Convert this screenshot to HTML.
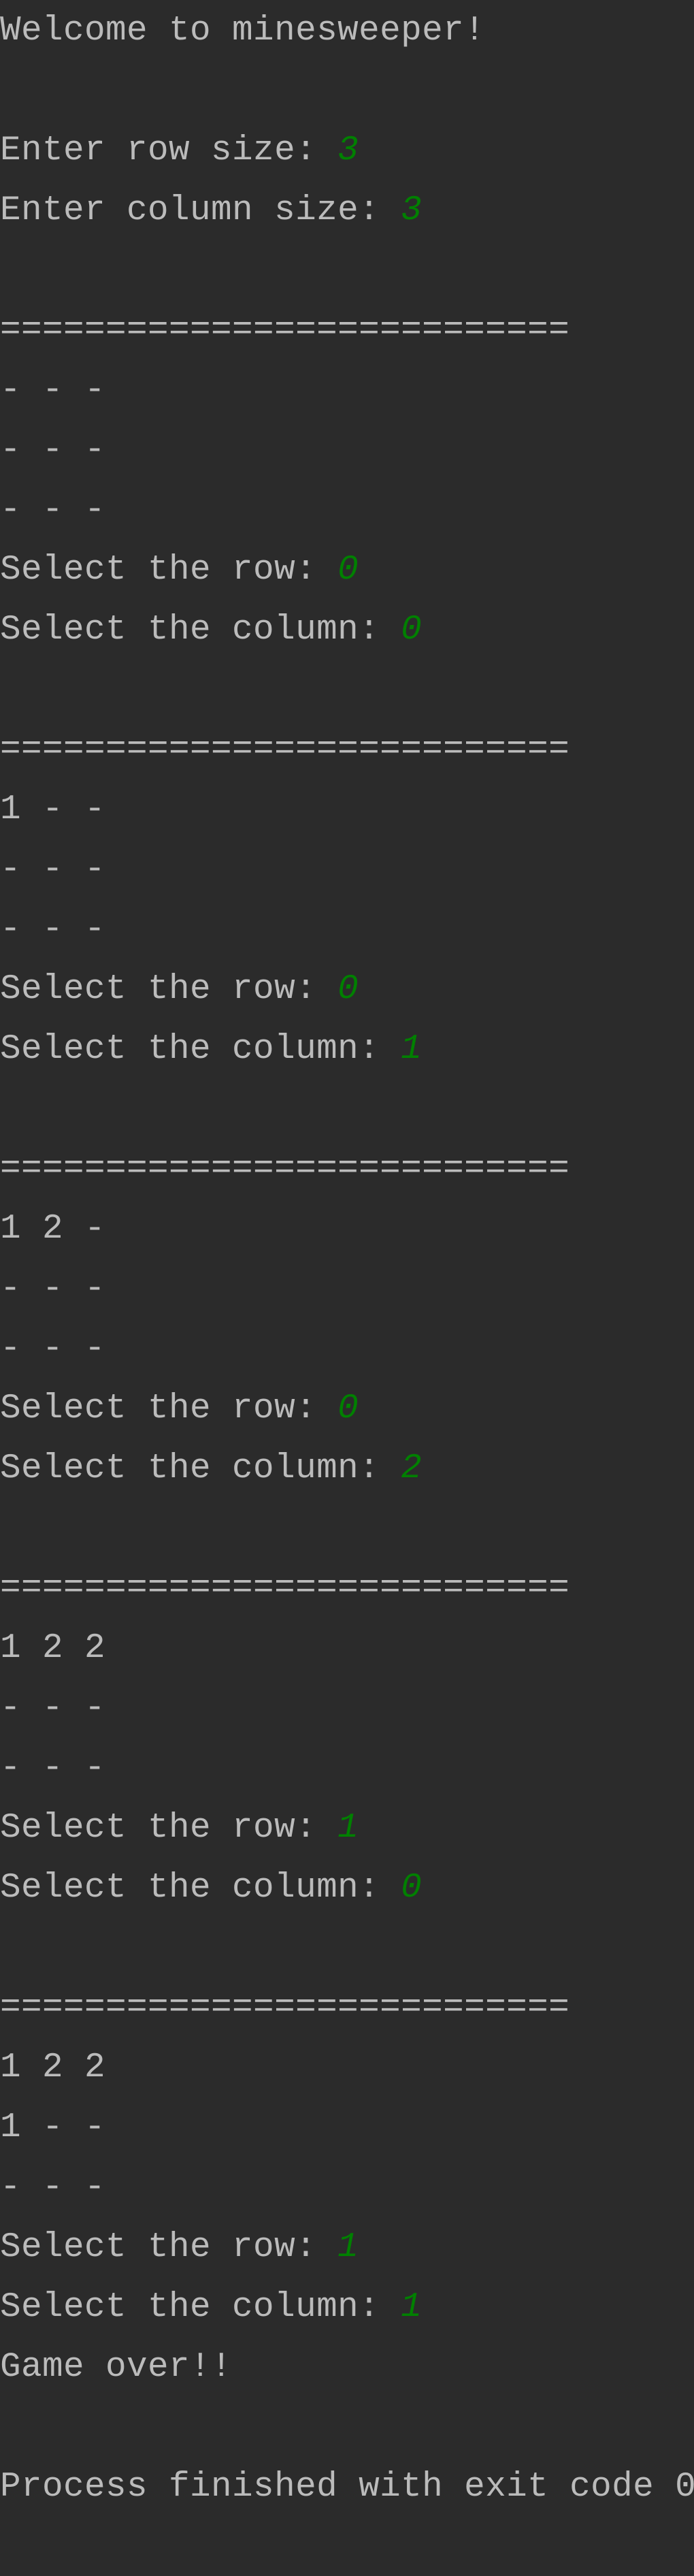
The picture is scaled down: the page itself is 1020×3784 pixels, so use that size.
<!DOCTYPE html>
<html><head><meta charset="utf-8"><style>
html,body{margin:0;padding:0;background:#2b2b2b;}
body{width:1020px;height:3784px;overflow:hidden;}
pre{margin:0;padding:2px 0 0 0;font-family:"Liberation Mono",monospace;font-size:51px;line-height:88px;letter-spacing:0.4px;color:#bbbbbb;white-space:pre;}
i{color:#008000;font-style:italic;}
</style></head><body><pre>Welcome to minesweeper!

Enter row size: <i>3</i>
Enter column size: <i>3</i>

===========================
- - -
- - -
- - -
Select the row: <i>0</i>
Select the column: <i>0</i>

===========================
1 - -
- - -
- - -
Select the row: <i>0</i>
Select the column: <i>1</i>

===========================
1 2 -
- - -
- - -
Select the row: <i>0</i>
Select the column: <i>2</i>

===========================
1 2 2
- - -
- - -
Select the row: <i>1</i>
Select the column: <i>0</i>

===========================
1 2 2
1 - -
- - -
Select the row: <i>1</i>
Select the column: <i>1</i>
Game over!!

Process finished with exit code 0</pre></body></html>
